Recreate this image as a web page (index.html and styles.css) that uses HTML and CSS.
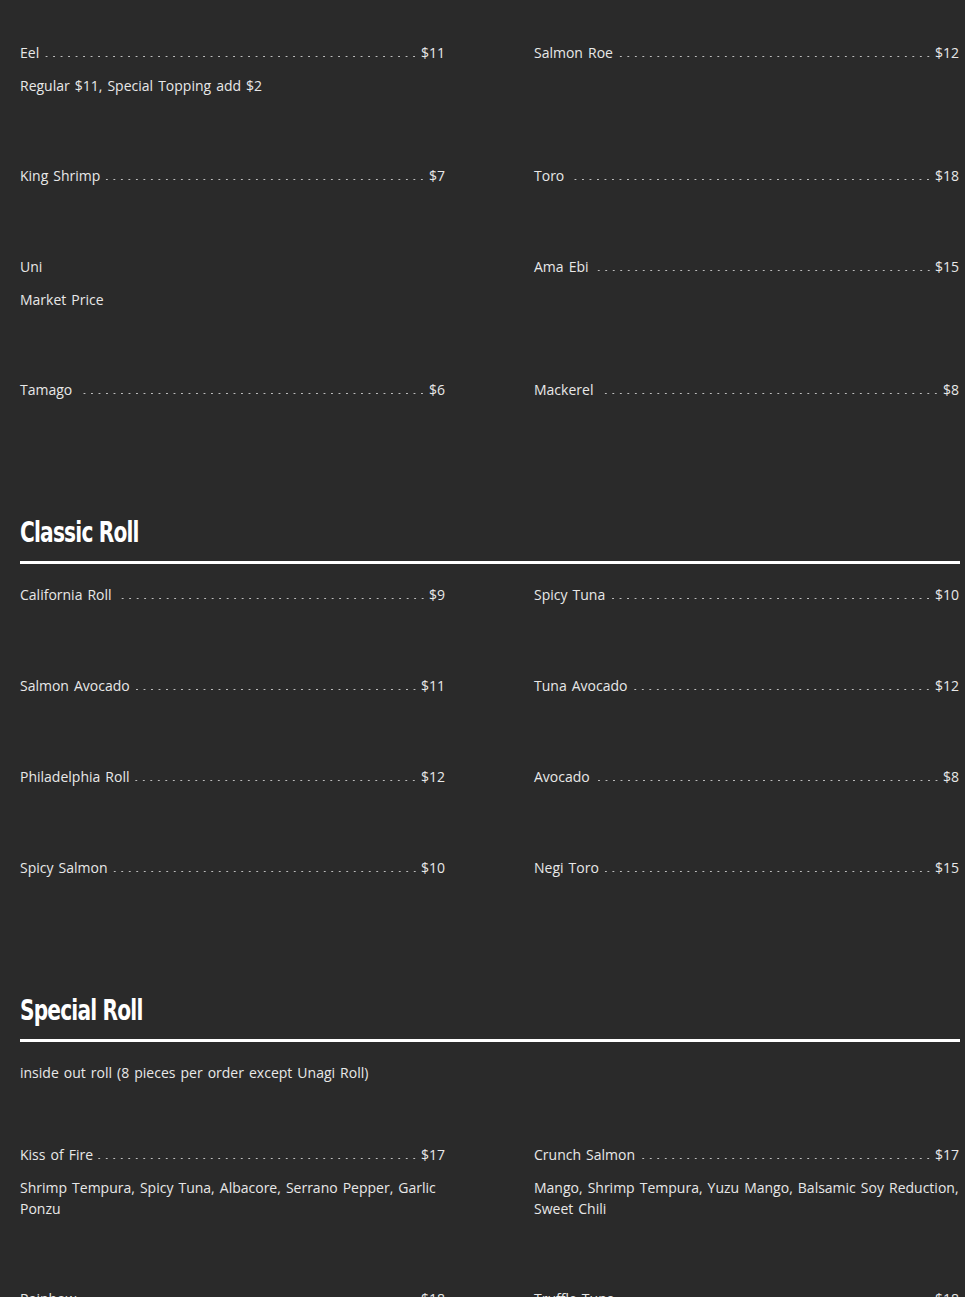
FILE: index.html
```html
<!DOCTYPE html>
<html lang="en">
<head>
<meta charset="utf-8">
<title>Menu</title>
<link rel="stylesheet" href="styles.css">
</head>
<body>
<main class="menu">
  <section class="section">
    <div class="grid">
      <div class="item">
        <div class="line"><span class="name">Eel</span><span class="dots"></span><span class="price">$11</span></div>
        <p class="desc">Regular $11, Special Topping add $2</p>
      </div>
      <div class="item">
        <div class="line"><span class="name">Salmon Roe</span><span class="dots"></span><span class="price">$12</span></div>
      </div>
      <div class="item">
        <div class="line"><span class="name">King Shrimp</span><span class="dots"></span><span class="price">$7</span></div>
      </div>
      <div class="item">
        <div class="line"><span class="name">Toro</span><span class="dots"></span><span class="price">$18</span></div>
      </div>
      <div class="item">
        <div class="line"><span class="name">Uni</span></div>
        <p class="desc">Market Price</p>
      </div>
      <div class="item">
        <div class="line"><span class="name">Ama Ebi</span><span class="dots"></span><span class="price">$15</span></div>
      </div>
      <div class="item">
        <div class="line"><span class="name">Tamago</span><span class="dots dots-wide"></span><span class="price">$6</span></div>
      </div>
      <div class="item">
        <div class="line"><span class="name">Mackerel</span><span class="dots dots-wide"></span><span class="price">$8</span></div>
      </div>
    </div>
  </section>

  <section class="section">
    <h2 class="heading"><span class="heading-text">Classic Roll</span></h2>
    <div class="grid">
      <div class="item">
        <div class="line"><span class="name">California Roll</span><span class="dots dots-wide"></span><span class="price">$9</span></div>
      </div>
      <div class="item">
        <div class="line"><span class="name">Spicy Tuna</span><span class="dots"></span><span class="price">$10</span></div>
      </div>
      <div class="item">
        <div class="line"><span class="name">Salmon Avocado</span><span class="dots"></span><span class="price">$11</span></div>
      </div>
      <div class="item">
        <div class="line"><span class="name">Tuna Avocado</span><span class="dots"></span><span class="price">$12</span></div>
      </div>
      <div class="item">
        <div class="line"><span class="name">Philadelphia Roll</span><span class="dots"></span><span class="price">$12</span></div>
      </div>
      <div class="item">
        <div class="line"><span class="name">Avocado</span><span class="dots"></span><span class="price">$8</span></div>
      </div>
      <div class="item">
        <div class="line"><span class="name">Spicy Salmon</span><span class="dots"></span><span class="price">$10</span></div>
      </div>
      <div class="item">
        <div class="line"><span class="name">Negi Toro</span><span class="dots"></span><span class="price">$15</span></div>
      </div>
    </div>
  </section>

  <section class="section">
    <h2 class="heading"><span class="heading-text">Special Roll</span></h2>
    <p class="note">inside out roll (8 pieces per order except Unagi Roll)</p>
    <div class="grid">
      <div class="item">
        <div class="line"><span class="name">Kiss of Fire</span><span class="dots"></span><span class="price">$17</span></div>
        <p class="desc">Shrimp Tempura, Spicy Tuna, Albacore, Serrano Pepper, Garlic Ponzu</p>
      </div>
      <div class="item">
        <div class="line"><span class="name">Crunch Salmon</span><span class="dots"></span><span class="price">$17</span></div>
        <p class="desc">Mango, Shrimp Tempura, Yuzu Mango, Balsamic Soy Reduction, Sweet Chili</p>
      </div>
      <div class="item">
        <div class="line"><span class="name">Rainbow</span><span class="dots"></span><span class="price">$18</span></div>
      </div>
      <div class="item">
        <div class="line"><span class="name">Truffle Tuna</span><span class="dots"></span><span class="price">$18</span></div>
      </div>
    </div>
  </section>
</main>
</body>
</html>
```

FILE: styles.css
```css
html, body {
  margin: 0;
  padding: 0;
  background: #2a2a2a;
}

body {
  color: #e8e8e8;
  font-family: "Open Sans", "Liberation Sans", sans-serif;
  font-size: 14px;
  line-height: 21px;
  word-spacing: 1.4px;
}

.menu {
  width: 940px;
  padding: 42px 0 0 20px;
}

.section {
  margin: 0;
}

.grid {
  display: grid;
  grid-template-columns: 425px 425px;
  column-gap: 89px;
}

.item {
  padding-bottom: 70px;
}

.line {
  display: flex;
  align-items: baseline;
  height: 21px;
}

.name {
  white-space: nowrap;
}

.dots {
  flex: 1;
  height: 3px;
  margin: 0 3px 0 5px;
  background-image: radial-gradient(circle, #bdbdbd 0.7px, transparent 1.1px);
  background-size: 7.5px 3px;
  background-repeat: repeat-x;
  background-position: right center;
  align-self: center;
  transform: translateY(4px);
}

.dots-wide {
  margin-left: 9px;
}

.price {
  white-space: nowrap;
}

.desc {
  margin: 12px 0 -1px;
  width: 432px;
}

.heading {
  margin: 43px 0 20px;
  height: 40px;
  padding-bottom: 8px;
  border-bottom: 3px solid #ffffff;
  font-family: Impact, "DejaVu Sans Condensed", "DejaVu Sans", sans-serif;
  font-stretch: condensed;
  font-weight: 700;
  font-size: 28px;
  line-height: 40px;
  letter-spacing: -1px;
  word-spacing: 0;
  color: #ffffff;
}

.heading-text {
  display: inline-block;
  transform: scaleX(0.8);
  transform-origin: left center;
}

.note {
  margin: 0 0 61px;
}
```
